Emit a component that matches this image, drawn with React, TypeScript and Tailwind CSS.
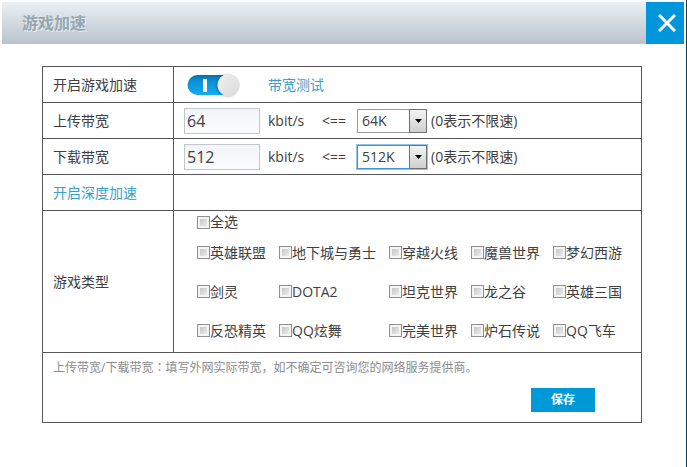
import { useState } from "react";

const GAMES = [
  ["英雄联盟", "地下城与勇士", "穿越火线", "魔兽世界", "梦幻西游"],
  ["剑灵", "DOTA2", "坦克世界", "龙之谷", "英雄三国"],
  ["反恐精英", "QQ炫舞", "完美世界", "炉石传说", "QQ飞车"],
];
const ALL_GAMES = GAMES.flat();
const SPEEDS = ["0", "64", "128", "256", "512", "1024"];

interface CheckProps {
  label: string;
  checked: boolean;
  onChange: () => void;
}
function Check({ label, checked, onChange }: CheckProps) {
  return (
    <label className="flex items-center whitespace-nowrap">
      <input
        type="checkbox"
        checked={checked}
        onChange={onChange}
        className="size-[13px] shrink-0 appearance-none border border-[#8e8f8f] bg-linear-to-br from-[#b9bdc2] to-[#f6f6f6] shadow-[inset_0_0_0_2px_#f4f4f4] checked:from-[#0096d6] checked:to-[#0096d6]"
      />
      {label}
    </label>
  );
}

interface BandwidthProps {
  id: string;
  label: string;
  value: string;
  active?: boolean;
  onChange: (value: string) => void;
}
function BandwidthRow({ id, label, value, active, onChange }: BandwidthProps) {
  return (
    <tr>
      <th className="h-9 border border-[#58585a] pl-2.5 text-left font-normal">
        <label htmlFor={id}>{label}</label>
      </th>
      <td className="h-9 border border-[#58585a] pl-2.5">
        <div className="flex items-center">
          <input
            id={id}
            type="text"
            value={value}
            onChange={(e) => onChange(e.target.value)}
            className="h-[26px] w-[76px] border border-[#c3c6ca] bg-linear-to-b from-[#f3f5f8] to-[#fafbfd] px-0.5 text-base text-[#404040] outline-none"
          />
          <span className="ml-2 w-[54px]">kbit/s</span>
          <span className="w-[35px]">&lt;==</span>
          <div className="relative">
            <select
              aria-label={label}
              value={value}
              onChange={(e) => onChange(e.target.value)}
              className={
                active
                  ? "block h-6 w-[70px] appearance-none border border-[#3c96d2] bg-white pl-1 outline-1 outline-[#8cc4ec]"
                  : "block h-6 w-[70px] appearance-none border border-[#999] bg-white pl-1 outline-none"
              }
            >
              {SPEEDS.map((speed) => (
                <option key={speed} value={speed}>
                  {speed}K
                </option>
              ))}
            </select>
            <span className="pointer-events-none absolute inset-y-0 right-0 flex w-[18px] items-center justify-center border border-[#707070] bg-linear-to-b from-[#f4f4f4] to-[#cfcfcf]">
              <svg width="7" height="4" viewBox="0 0 7 4">
                <path d="M0 0h7L3.5 4z" fill="#000" />
              </svg>
            </span>
          </div>
          <span className="ml-1">(0表示不限速)</span>
        </div>
      </td>
    </tr>
  );
}

function Toggle({ checked, onChange }: { checked: boolean; onChange: () => void }) {
  return (
    <label className="relative block">
      <input
        type="checkbox"
        role="switch"
        aria-label="开启游戏加速"
        checked={checked}
        onChange={onChange}
        className="sr-only"
      />
      <svg width="54" height="26" viewBox="0 0 54 26">
        <defs>
          <linearGradient id="track" x1="0" y1="0" x2="0" y2="1">
            <stop offset="0" stopColor="#0a6ca8" />
            <stop offset="0.3" stopColor="#0a90d6" />
            <stop offset="1" stopColor="#14aaf0" />
          </linearGradient>
          <linearGradient id="knob" x1="0" y1="0" x2="1" y2="1">
            <stop offset="0" stopColor="#f0f0f0" />
            <stop offset="1" stopColor="#dadada" />
          </linearGradient>
        </defs>
        <rect x="1.5" y="3" width="50" height="20" rx="10" fill={checked ? "url(#track)" : "#b5b9bd"} />
        {checked && <rect x="17" y="7" width="4" height="13" rx="0.5" fill="#fff" />}
        <circle cx={checked ? 41.5 : 13} cy="13.5" r="12" fill="#000" opacity="0.12" />
        <circle cx={checked ? 42.5 : 13} cy="13" r="11" fill="url(#knob)" />
      </svg>
    </label>
  );
}

export default function App() {
  const [enabled, setEnabled] = useState(true);
  const [upload, setUpload] = useState("64");
  const [download, setDownload] = useState("512");
  const [selected, setSelected] = useState<string[]>([]);

  const allSelected = selected.length === ALL_GAMES.length;

  const toggleGame = (game: string) => {
    setSelected((prev) =>
      prev.includes(game) ? prev.filter((g) => g !== game) : [...prev, game]
    );
  };

  return (
    <div className="min-h-screen border-r border-[#0b3a4a] bg-white pt-0.5 pl-0.5 font-['Open_Sans','Noto_Sans_CJK_SC',sans-serif] text-sm text-[#404040]">
      <header className="mr-0.5 flex h-[42px] items-center justify-between bg-linear-to-b from-[#ebf0f3] to-[#b9c3cc]">
        <h1 className="pl-5 text-base font-bold text-[#96a5ae] text-shadow-[1px_1px_0_#e8eef2]">
          游戏加速
        </h1>
        <button
          aria-label="关闭"
          className="flex h-full w-[38px] items-center justify-center bg-[#0096dc] pl-1"
        >
          <svg width="18" height="18" viewBox="0 0 18 18">
            <path d="M1 1l16 16M17 1l-16 16" stroke="#fff" strokeWidth="3" />
          </svg>
        </button>
      </header>

      <main className="mt-[22px] mr-11 ml-10">
        <table className="w-full table-fixed border-collapse">
          <colgroup>
            <col className="w-[131px]" />
            <col />
          </colgroup>
          <tbody>
            <tr>
              <th className="h-9 border border-[#58585a] pl-2.5 text-left font-normal">
                开启游戏加速
              </th>
              <td className="h-9 border border-[#58585a] pl-3">
                <div className="flex items-center gap-7">
                  <Toggle checked={enabled} onChange={() => setEnabled(!enabled)} />
                  <a href="#test" className="text-[#3a9fcb]">
                    带宽测试
                  </a>
                </div>
              </td>
            </tr>
            <BandwidthRow id="upload" label="上传带宽" value={upload} onChange={setUpload} />
            <BandwidthRow id="download" label="下载带宽" value={download} active onChange={setDownload} />
            <tr>
              <th className="h-9 border border-[#58585a] pl-2.5 text-left font-normal">
                <a href="#deep" className="text-[#3a9fcb]">
                  开启深度加速
                </a>
              </th>
              <td className="h-9 border border-[#58585a]"></td>
            </tr>
            <tr>
              <th className="border border-[#58585a] pl-2.5 text-left font-normal">游戏类型</th>
              <td className="h-[142px] border border-[#58585a] pl-[23px] align-top">
                <div className="flex h-[22px] items-center">
                  <Check
                    label="全选"
                    checked={allSelected}
                    onChange={() => setSelected(allSelected ? [] : ALL_GAMES)}
                  />
                </div>
                <div className="grid auto-rows-[39px] grid-cols-[82px_110px_82px_82px_1fr]">
                  {ALL_GAMES.map((game) => (
                    <Check
                      key={game}
                      label={game}
                      checked={selected.includes(game)}
                      onChange={() => toggleGame(game)}
                    />
                  ))}
                </div>
              </td>
            </tr>
            <tr>
              <td
                colSpan={2}
                className="h-[70px] border border-[#58585a] pt-1.5 pr-[46px] pl-2.5 align-top"
              >
                <p className="text-xs text-[#8c8c8c]">
                  上传带宽/下载带宽
                  <span className="font-['Noto_Sans_CJK_TC',sans-serif]" lang="zh-TW">
                    ：
                  </span>
                  填写外网实际带宽，如不确定可咨询您的网络服务提供商。
                </p>
                <div className="mt-3 flex justify-end">
                  <button className="h-6 w-16 bg-[#0099d8] text-xs font-bold text-white">
                    保存
                  </button>
                </div>
              </td>
            </tr>
          </tbody>
        </table>
      </main>
    </div>
  );
}
